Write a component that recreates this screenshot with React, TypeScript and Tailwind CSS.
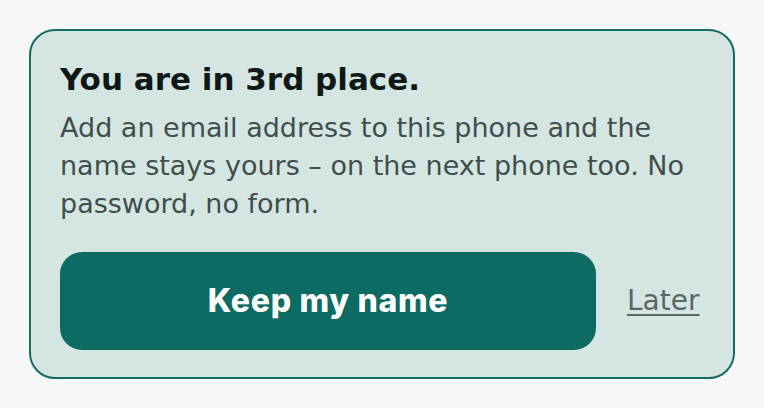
import React from "react";

export default function App() {
  return (
    <div className="w-[764px] h-[408px] bg-[#f7f7f7] p-[29px]" style={{ fontFamily: '"DejaVu Sans", sans-serif' }}>
      <div className="h-[350px] rounded-[26px] border-2 border-[#126c63] bg-[#d5e6e2] px-[29px] pt-[28px]">
        <h1 className="text-[31px] font-bold leading-[40px] text-[#0e1917]">You are in 3rd place.</h1>
        <p className="mt-[10px] text-[27px] leading-[38px] text-[#3f4d4b]">
          Add an email address to this phone and the name stays yours – on the next phone too. No password, no form.
        </p>
        <div className="mt-[29px] flex items-center gap-[31px]">
          <button
            className="h-[98px] w-[536px] shrink-0 rounded-[22px] bg-[#0c6b62] text-[32px] font-extrabold tracking-[0.7px] text-white"
            style={{ fontFamily: 'Inter, sans-serif' }}
          >
            Keep my name
          </button>
          <span className="text-[28px] text-[#5a6664] underline decoration-2 underline-offset-[4px]">Later</span>
        </div>
      </div>
    </div>
  );
}
